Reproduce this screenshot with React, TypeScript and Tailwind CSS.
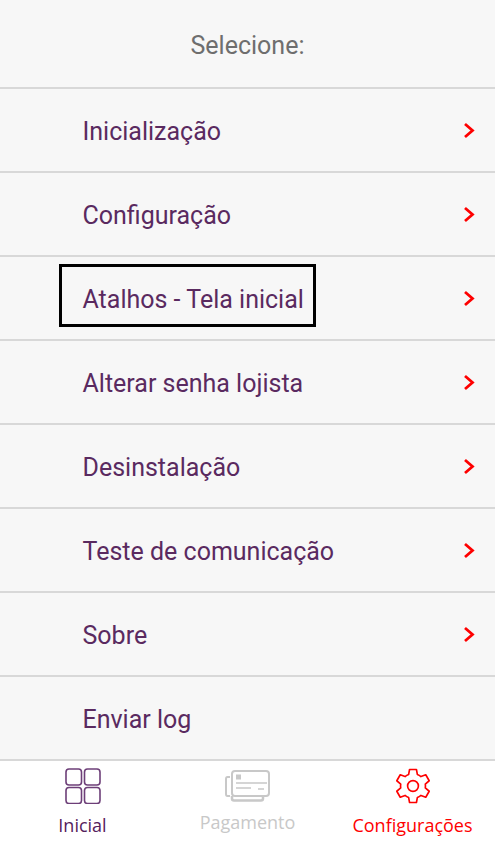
const items = ["Inicialização", "Configuração", "Atalhos - Tela inicial", "Alterar senha lojista", "Desinstalação", "Teste de comunicação", "Sobre"];

function Chevron() {
  return (
    <svg width="12" height="18" viewBox="0 0 12 18" fill="none" className="shrink-0 -translate-y-[1px]">
      <path d="M2 2 L9.5 8.5 L2 15" stroke="#fe0000" strokeWidth="2.8" />
    </svg>
  );
}

function Row({ label, chevron, boxed }: { label: string; chevron: boolean; boxed?: boolean }) {
  return (
    <div className="relative flex h-[84px] items-center justify-between border-b-2 border-[#d8d8d8] pl-[82.5px] pr-[20px] pt-[4px]">
      <span className="text-[25px] leading-[28px] text-[#5a2a60]">{label}</span>
      {chevron && <Chevron />}
      {boxed && <div className="absolute left-[59px] top-[7px] h-[63px] w-[257px] border-[3px] border-black" />}
    </div>
  );
}

export default function App() {
  return (
    <div className="flex h-[851px] w-[495px] flex-col overflow-hidden bg-white font-['Roboto',sans-serif]">
      <div className="bg-[#f7f7f7]">
        <div className="flex h-[89px] items-center justify-center border-b-2 border-[#d8d8d8] pt-[4px]">
          <span className="text-[25px] leading-[28px] text-[#6e6e6e]">Selecione:</span>
        </div>
        {items.map((label, i) => (
          <Row key={label} label={label} chevron boxed={i === 2} />
        ))}
        <Row label="Enviar log" chevron={false} />
      </div>
      <div className="grid grid-cols-3 font-['Open_Sans',sans-serif] text-[18px] leading-[24px]">
        <div className="flex flex-col items-center pt-[7px] text-[#55215c]">
          <svg width="36" height="36" viewBox="0 0 36 36" fill="none" stroke="#6d3f78" strokeWidth="1.6">
            <rect x="1" y="1" width="15.5" height="16" rx="3" />
            <rect x="19.5" y="1" width="15.5" height="16" rx="3" />
            <rect x="1" y="19.5" width="15.5" height="16" rx="3" />
            <rect x="19.5" y="19.5" width="15.5" height="16" rx="3" />
          </svg>
          <span className="mt-[9px]">Inicial</span>
        </div>
        <div className="flex flex-col items-center pt-[9px] text-[#c8c8c8]">
          <svg width="46" height="32" viewBox="0 0 46 32" fill="none" stroke="#c8c8c8" strokeWidth="2">
            <path d="M5 7 H2.5 Q1 7 1 9 V24 Q1 26 2.5 26 H5" />
            <path d="M7 26 V28.5 Q7 30.5 9 30.5 H36 Q38 30.5 38 28.5 V27" strokeWidth="2.5" />
            <rect x="7" y="1" width="37" height="25" rx="3" />
            <rect x="11" y="4.5" width="5" height="5" fill="#c8c8c8" stroke="none" />
            <path d="M11 13 H42 M11 18 H26 M33 19 H39" strokeWidth="1.3" />
          </svg>
          <span className="mt-[8px]">Pagamento</span>
        </div>
        <div className="flex flex-col items-center pt-[7px] text-[#fe0000]">
          <svg width="36" height="36" viewBox="0 0 24 24" fill="none" stroke="#fe0000" strokeWidth="1.1" strokeLinejoin="round">
            <path d="M9.7 1 H14.3 L14.9 4.3 Q16.2 4.8 17.3 5.7 L20.5 4.5 L22.8 8.5 L20.2 10.7 Q20.4 12 20.2 13.3 L22.8 15.5 L20.5 19.5 L17.3 18.3 Q16.2 19.2 14.9 19.7 L14.3 23 H9.7 L9.1 19.7 Q7.8 19.2 6.7 18.3 L3.5 19.5 L1.2 15.5 L3.8 13.3 Q3.6 12 3.8 10.7 L1.2 8.5 L3.5 4.5 L6.7 5.7 Q7.8 4.8 9.1 4.3 Z" />
            <circle cx="12" cy="12" r="3.6" />
          </svg>
          <span className="mt-[9px]">Configurações</span>
        </div>
      </div>
    </div>
  );
}
